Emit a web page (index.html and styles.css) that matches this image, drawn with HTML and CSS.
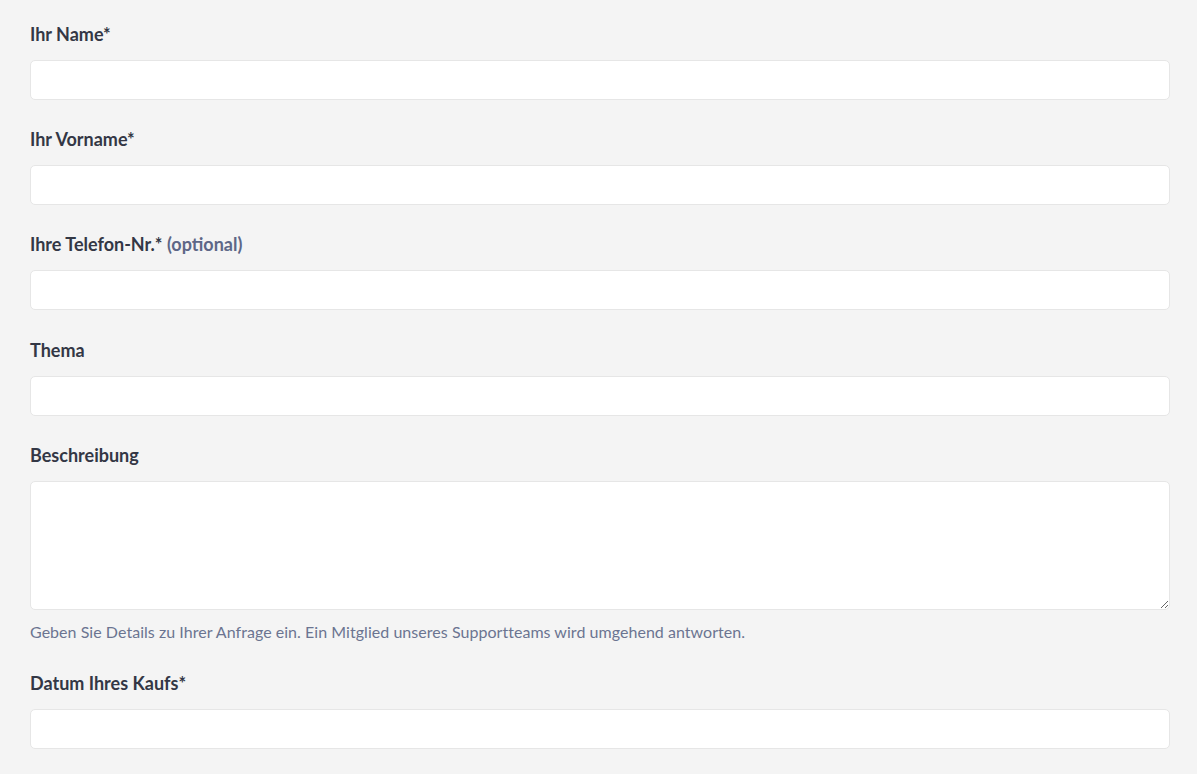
FILE: index.html
```html
<!DOCTYPE html>
<html lang="de">
<head>
<meta charset="utf-8">
<link rel="stylesheet" href="styles.css">
</head>
<body>
<form class="form">
  <div class="field">
    <label class="label">Ihr Name*</label>
    <input class="input" type="text">
  </div>
  <div class="field">
    <label class="label">Ihr Vorname*</label>
    <input class="input" type="text">
  </div>
  <div class="field">
    <label class="label">Ihre Telefon-Nr.* <span class="optional">(optional)</span></label>
    <input class="input" type="text">
  </div>
  <div class="field">
    <label class="label">Thema</label>
    <input class="input" type="text">
  </div>
  <div class="field field-help">
    <label class="label">Beschreibung</label>
    <textarea class="input textarea"></textarea>
    <p class="help">Geben Sie Details zu Ihrer Anfrage ein. Ein Mitglied unseres Supportteams wird umgehend antworten.</p>
  </div>
  <div class="field">
    <label class="label">Datum Ihres Kaufs*</label>
    <input class="input" type="text">
  </div>
</form>
</body>
</html>
```
FILE: styles.css
```css
* { box-sizing: border-box; }
html, body { margin: 0; padding: 0; }
body {
  background: #f4f4f4;
  font-family: Lato, "Open Sans", sans-serif;
  color: #333745;
}
.form {
  padding: 22px 27px 0 30px;
}
.field {
  display: flex;
  flex-direction: column;
  margin-bottom: 27.2px;
}
.label {
  font-size: 18px;
  font-weight: 700;
  line-height: 24px;
  margin-bottom: 14px;
  color: #333745;
}
.optional {
  color: #5d6787;
}
.input {
  display: block;
  width: 100%;
  height: 40px;
  background: #fff;
  border: 1px solid #e6e6e6;
  border-radius: 5px;
  font-family: inherit;
  font-size: 16px;
  padding: 0 12px;
  margin: 0;
}
.textarea {
  height: 129px;
  resize: vertical;
  padding: 10px 12px;
}
.help {
  margin: 11px 0 0;
  font-size: 16px;
  line-height: 22px;
  letter-spacing: 0.04px;
  color: #6b7491;
}
.field-help { margin-bottom: 28px; }
```
